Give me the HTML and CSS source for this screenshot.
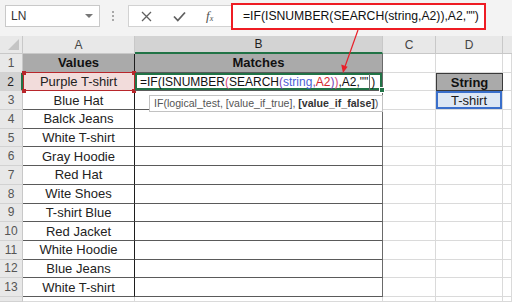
FILE: index.html
```html
<!DOCTYPE html>
<html>
<head>
<meta charset="utf-8">
<link rel="stylesheet" href="styles.css">
</head>
<body>
<div class="page">
  <div class="toolbar">
    <div class="namebox"><span class="nb-text">LN</span><span class="nb-arrow"></span></div>
    <div class="dots"><i></i><i></i><i></i></div>
    <div class="fxbox">
      <svg class="ic-x" width="11" height="11" viewBox="0 0 11 11"><path d="M1 1 L10 10 M10 1 L1 10" stroke="#606060" stroke-width="1.3" fill="none"/></svg>
      <svg class="ic-ok" width="13" height="11" viewBox="0 0 13 11"><path d="M1 5.5 L4.8 9.5 L12 1.5" stroke="#606060" stroke-width="1.8" fill="none"/></svg>
      <span class="ic-fx">f<sub>x</sub></span>
    </div>
    <div class="formula">=IF(ISNUMBER(SEARCH(string,A2)),A2,"")</div>
  </div>
  <div class="sheet">
    <div class="corner"><span class="tri"></span></div>
    <div class="ch">A</div>
    <div class="ch sel">B</div>
    <div class="ch">C</div>
    <div class="ch">D</div>
    <div class="ch last"></div>

    <div class="rh">1</div>
    <div class="c ta th">Values</div>
    <div class="c tb th">Matches</div>
    <div class="c"></div>
    <div class="c"></div>
    <div class="c"></div>

    <div class="rh sel">2</div>
    <div class="c ta a2"><span class="hl"></span><span class="hd tl"></span><span class="hd tr"></span><span class="hd bl"></span><span class="hd br"></span><span class="txt">Purple T-shirt</span></div>
    <div class="c tb b2">=IF(ISNUMBER<span class="p1">(</span>SEARCH<span class="p2">(</span><span class="rb">string</span><span class="p2">,</span><span class="rr">A2</span><span class="p2">)</span><span class="p1">)</span>,A2,""<span class="caret"></span>)<span class="fillh"></span></div>
    <div class="c"></div>
    <div class="c dh">String</div>
    <div class="c"></div>

    <div class="rh">3</div>
    <div class="c ta">Blue Hat</div>
    <div class="c tb"></div>
    <div class="c"></div>
    <div class="c d3">T-shirt</div>
    <div class="c"></div>

    <div class="rh">4</div>
    <div class="c ta">Balck Jeans</div>
    <div class="c tb"></div>
    <div class="c"></div>
    <div class="c"></div>
    <div class="c"></div>

    <div class="rh">5</div>
    <div class="c ta">White T-shirt</div>
    <div class="c tb"></div>
    <div class="c"></div>
    <div class="c"></div>
    <div class="c"></div>

    <div class="rh">6</div>
    <div class="c ta">Gray Hoodie</div>
    <div class="c tb"></div>
    <div class="c"></div>
    <div class="c"></div>
    <div class="c"></div>

    <div class="rh">7</div>
    <div class="c ta">Red Hat</div>
    <div class="c tb"></div>
    <div class="c"></div>
    <div class="c"></div>
    <div class="c"></div>

    <div class="rh">8</div>
    <div class="c ta">Wite Shoes</div>
    <div class="c tb"></div>
    <div class="c"></div>
    <div class="c"></div>
    <div class="c"></div>

    <div class="rh">9</div>
    <div class="c ta">T-shirt Blue</div>
    <div class="c tb"></div>
    <div class="c"></div>
    <div class="c"></div>
    <div class="c"></div>

    <div class="rh">10</div>
    <div class="c ta">Red Jacket</div>
    <div class="c tb"></div>
    <div class="c"></div>
    <div class="c"></div>
    <div class="c"></div>

    <div class="rh">11</div>
    <div class="c ta">White Hoodie</div>
    <div class="c tb"></div>
    <div class="c"></div>
    <div class="c"></div>
    <div class="c"></div>

    <div class="rh">12</div>
    <div class="c ta">Blue Jeans</div>
    <div class="c tb"></div>
    <div class="c"></div>
    <div class="c"></div>
    <div class="c"></div>

    <div class="rh">13</div>
    <div class="c ta">White T-shirt</div>
    <div class="c tb"></div>
    <div class="c"></div>
    <div class="c"></div>
    <div class="c"></div>

    <div class="rh"></div>
    <div class="c"></div>
    <div class="c"></div>
    <div class="c"></div>
    <div class="c"></div>
    <div class="c"></div>

    <div class="tooltip">IF(logical_test, [value_if_true], <b>[value_if_false]</b>)</div>
  </div>
  <svg class="arrow" width="512" height="302" viewBox="0 0 512 302">
    <line x1="358" y1="30" x2="345.2" y2="66" stroke="#e8202a" stroke-width="1.2"/>
    <path d="M343 73 L341.2 64.6 L347.6 66.8 Z" fill="#e8202a"/>
  </svg>
</div>
</body>
</html>
```
FILE: styles.css
```css
* { box-sizing: border-box; }
html, body { margin: 0; padding: 0; }
body {
  width: 512px;
  height: 302px;
  overflow: hidden;
  background: #ffffff;
  font-family: "Liberation Sans", Arial, sans-serif;
  color: #1a1a1a;
}
.page { position: relative; width: 512px; height: 302px; }

/* toolbar */
.toolbar {
  height: 36px;
  background: #f3f3f3;
  display: flex;
  align-items: flex-start;
  padding-left: 5px;
}
.namebox {
  margin-top: 5px;
  width: 95px;
  height: 22px;
  background: #fff;
  border: 1px solid #c9c9c9;
  display: flex;
  align-items: center;
  justify-content: space-between;
  padding: 0 6px 0 5px;
}
.nb-text { font-size: 12px; color: #333; }
.nb-arrow {
  width: 0; height: 0;
  border-left: 4px solid transparent;
  border-right: 4px solid transparent;
  border-top: 4px solid #777;
}
.dots {
  margin: 11px 0 0 12px;
  width: 16px;
  display: flex;
  flex-direction: column;
  gap: 2px;
}
.dots i { display: block; width: 2px; height: 2px; background: #a8a8a8; }
.fxbox {
  margin-top: 5px;
  width: 103px;
  height: 22px;
  background: #fff;
  border: 1px solid #d2d2d2;
  border-right: none;
  display: flex;
  align-items: center;
  padding-left: 12px;
}
.ic-x { margin-right: 21px; }
.ic-ok { margin-right: 20px; }
.ic-fx {
  font-family: "Liberation Serif", "Times New Roman", serif;
  font-style: italic;
  font-size: 13px;
  color: #505050;
  line-height: 1;
}
.ic-fx sub { font-size: 8px; vertical-align: -1px; }
.formula {
  margin-top: 3px;
  width: 255px;
  height: 27px;
  background: #fff;
  border: 2px solid #ee1c24;
  font-size: 12.2px;
  color: #111;
  padding-left: 10px;
  line-height: 23px;
  white-space: nowrap;
}

/* sheet */
.sheet {
  position: relative;
  display: grid;
  grid-template-columns: 23px 112px 248px 53px 67px 1fr;
  grid-template-rows: 18px repeat(13, 18.7px) 1fr;
  height: 266px;
}
.corner {
  background: #e8e8e8;
  border-right: 1px solid #c8c8c8;
  border-bottom: 1px solid #c8c8c8;
  position: relative;
}
.tri {
  position: absolute;
  right: 3px;
  bottom: 3px;
  width: 0; height: 0;
  border-left: 11px solid transparent;
  border-bottom: 11px solid #c4c4c4;
}
.ch {
  background: #e8e8e8;
  border-right: 1px solid #c8c8c8;
  border-bottom: 1px solid #c8c8c8;
  font-size: 12px;
  color: #444;
  display: flex;
  align-items: center;
  justify-content: center;
}
.ch.sel {
  background: #d3d3d3;
  border-bottom: 2px solid #217346;
  color: #1f1f1f;
}
.ch.last { border-right: none; }
.rh {
  background: #e8e8e8;
  border-right: 1px solid #c8c8c8;
  border-bottom: 1px solid #d2d2d2;
  font-size: 12px;
  color: #555;
  display: flex;
  align-items: center;
  justify-content: center;
}
.rh.sel {
  background: #d3d3d3;
  border-right: 2px solid #217346;
  color: #222;
}
.c {
  border-right: 1px solid #dadada;
  border-bottom: 1px solid #dadada;
  font-size: 13px;
  display: flex;
  align-items: center;
  justify-content: center;
  white-space: nowrap;
  color: #222;
}
.ta { border-right: 1px solid #1e1e1e; border-bottom: 1px solid #5a5a5a; }
.tb { border-right: 1px solid #6a6a6a; border-bottom: 1px solid #5a5a5a; }
.th { background: #aaaaaa; font-weight: bold; color: #111; }

.a2 { position: relative; background: #f2dcdb; }
.a2 .txt { position: relative; }
.hl {
  position: absolute;
  left: 0; right: -1px; top: -1px; bottom: -1px;
  border: 1.5px solid #b8262b;
}
.hd { position: absolute; width: 4px; height: 4px; background: #b8262b; }
.hd.tl { left: -1px; top: -2px; }
.hd.tr { right: -2px; top: -2px; }
.hd.bl { left: -1px; bottom: -3px; }
.hd.br { right: -2px; bottom: -3px; }

.b2 {
  position: relative;
  justify-content: flex-start;
  padding-left: 5px;
  font-size: 12px;
  box-shadow: inset 0 0 0 2px #217346;
  color: #111;
}
.p1 { color: #d8477a; }
.p2 { color: #7a3fb8; }
.rb { color: #4b5fd4; }
.rr { color: #d4262e; }
.caret {
  display: inline-block;
  width: 1px;
  height: 16px;
  background: #6a6a6a;
  vertical-align: middle;
  margin: 0 1px;
}
.fillh {
  position: absolute;
  right: -3px;
  bottom: -3px;
  width: 6px;
  height: 6px;
  background: #217346;
  border: 1px solid #fff;
}
.dh {
  background: #aaaaaa;
  font-weight: bold;
  color: #111;
  border: 1px solid #3a3a3a;
}
.d3 {
  background: #dde7f4;
  box-shadow: inset 0 0 0 2px #3a6fcb;
  color: #1a1a1a;
}

.tooltip {
  position: absolute;
  left: 149px;
  top: 59px;
  height: 17px;
  padding: 0 4px 0 4px;
  background: #fff;
  border: 1px solid #c2c2c2;
  font-size: 10.6px;
  color: #555;
  line-height: 15px;
  white-space: nowrap;
  z-index: 3;
}
.tooltip b { color: #333; }

.arrow {
  position: absolute;
  left: 0;
  top: 0;
  pointer-events: none;
  z-index: 5;
}
```
